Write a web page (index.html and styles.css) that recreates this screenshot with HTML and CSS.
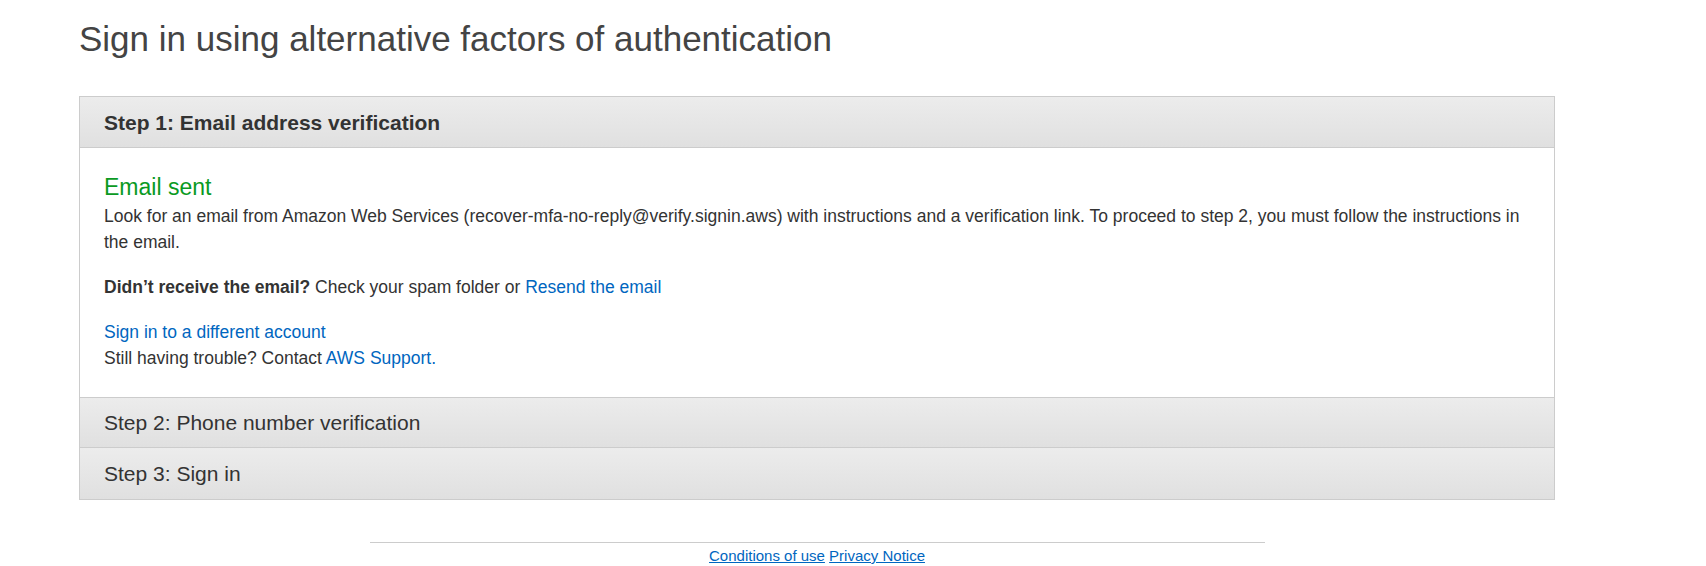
FILE: index.html
```html
<!DOCTYPE html>
<html lang="en">
<head>
<meta charset="utf-8">
<title>Sign in using alternative factors of authentication</title>
<link rel="stylesheet" href="styles.css">
</head>
<body>
<div class="page">
  <h1 class="title">Sign in using alternative factors of authentication</h1>
  <div class="panel">
    <div class="step-head active">Step 1: Email address verification</div>
    <div class="step-body">
      <h2 class="success">Email sent</h2>
      <p class="para">Look for an email from Amazon Web Services (recover-mfa-no-reply@verify.signin.aws) with instructions and a verification link. To proceed to step 2, you must follow the instructions in the email.</p>
      <p class="para"><strong>Didn’t receive the email?</strong> Check your spam folder or <a class="link" href="#">Resend the email</a></p>
      <p class="para last"><a class="link" href="#">Sign in to a different account</a><br>Still having trouble? Contact <a class="link" href="#">AWS Support.</a></p>
    </div>
    <div class="step-head">Step 2: Phone number verification</div>
    <div class="step-head">Step 3: Sign in</div>
  </div>
  <div class="footer">
    <div class="footer-rule"></div>
    <div class="footer-links"><a class="flink" href="#">Conditions of use</a> <a class="flink" href="#">Privacy Notice</a></div>
  </div>
</div>
</body>
</html>
```
FILE: styles.css
```css
html, body {
  margin: 0;
  padding: 0;
  background: #fff;
}
body {
  font-family: "Liberation Sans", Arial, sans-serif;
  color: #333;
}
.page {
  width: 1476px;
  margin-left: 79px;
  padding-top: 19px;
}
.title {
  margin: 0 0 38px;
  font-size: 35px;
  line-height: 39px;
  font-weight: 400;
  color: #444;
}
.panel {
  border: 1px solid #ccc;
}
.step-head {
  height: 50px;
  box-sizing: border-box;
  padding: 1px 24px 0;
  display: flex;
  align-items: center;
  font-size: 21px;
  color: #333;
  background: linear-gradient(#ececec, #e0e0e0);
  border-top: 1px solid #ccc;
}
.step-head:first-child {
  border-top: 0;
}
.step-head.active {
  font-weight: 700;
}
.step-head + .step-head {
  height: 51px;
}
.step-head:last-child {
  height: 52px;
}
.step-body {
  border-top: 1px solid #ccc;
  padding: 26px 24px 26px;
  font-size: 17.5px;
  line-height: 26px;
  background: #fff;
}
.success {
  margin: 0 0 3px;
  font-size: 23px;
  line-height: 26px;
  font-weight: 400;
  color: #0a9a23;
}
.para {
  margin: 0 0 19px;
}
.para.last {
  margin-bottom: 0;
}
.link {
  color: #0066c0;
  text-decoration: none;
}
.footer {
  display: flex;
  flex-direction: column;
  align-items: center;
  padding-top: 42px;
}
.footer-rule {
  width: 895px;
  border-top: 1px solid #ccc;
}
.footer-links {
  margin-top: 4px;
  font-size: 15px;
  line-height: 18px;
}
.flink {
  color: #0066c0;
  text-decoration: underline;
}
```
